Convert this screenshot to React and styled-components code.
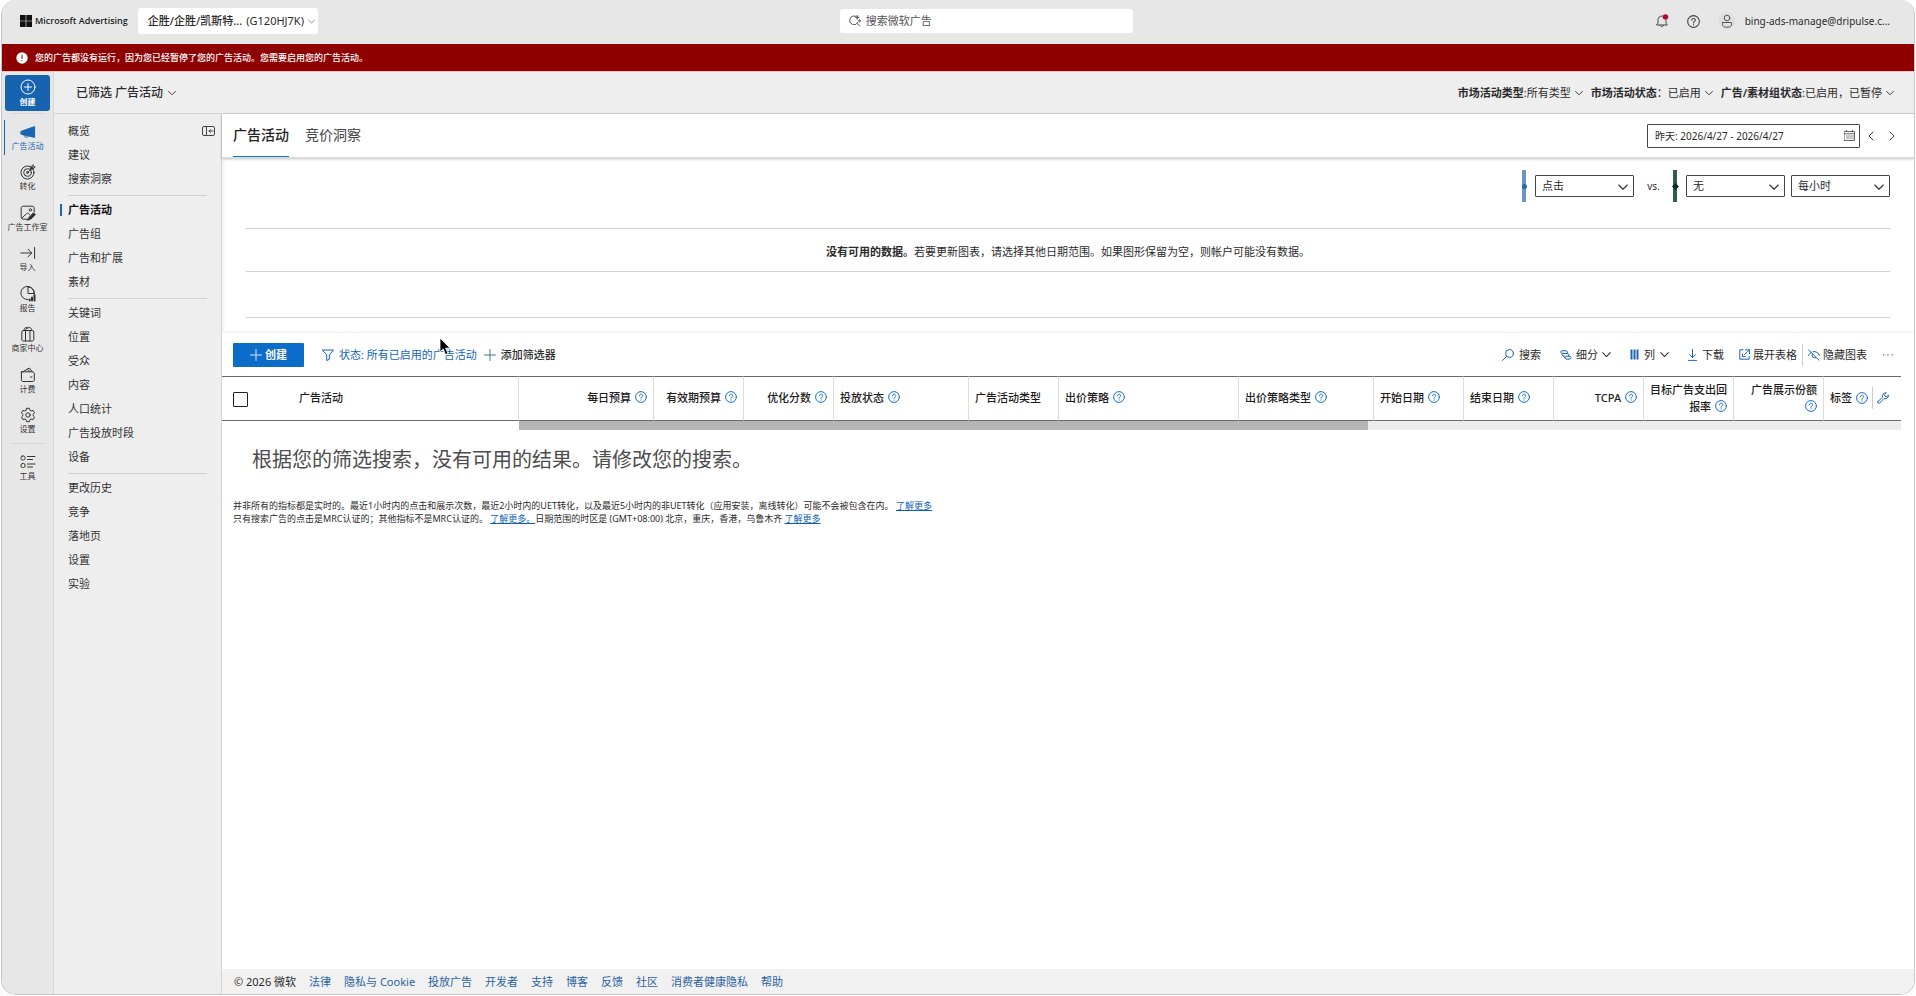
import React from "react";
import styled, { createGlobalStyle, css } from "styled-components";

const GlobalStyle = createGlobalStyle`
  *, *::before, *::after { box-sizing: border-box; }
  html, body, #root { height: 100%; }
  body {
    margin: 0;
    background: #fdfdfd;
    color: #2b2b2b;
    font-family: "Noto Sans", "Noto Sans CJK SC", sans-serif;
    font-size: 11px;
    line-height: 16px;
  }
  button, input, select { font: inherit; color: inherit; }
  button { padding: 0; border: 0; background: none; cursor: pointer; white-space: nowrap; }
  ul { margin: 0; padding: 0; list-style: none; }
  a { text-decoration: none; color: inherit; }
`;

const Window = styled.div`
  display: flex;
  flex-direction: column;
  min-height: calc(100vh - 1px);
  margin: 0 1px 1px;
  overflow: hidden;
  border: 1px solid #c8c8c8;
  border-top: 0;
  border-radius: 15px;
  background: #eee;
`;

const Svg = styled.svg`
  flex: none;
  width: ${(p) => p.$w || 12}px;
  height: ${(p) => p.$h || p.$w || 12}px;
  color: ${(p) => p.$color || "inherit"};
  fill: none;
  stroke: currentColor;
  stroke-width: ${(p) => p.$stroke || 1};
  stroke-linecap: round;
  stroke-linejoin: round;
`;

const BLUE = "#1a66b3";

const Chevron = ({ w = 8, color }) => (
  <Svg viewBox="0 0 8 8" $w={w} $color={color} aria-hidden="true"><path strokeWidth=".9" d="M.6 2.4 4 5.8l3.4-3.4" /></Svg>
);
const Help = ({ size = 12, color = "#1a6fc4" }) => (
  <Svg viewBox="0 0 12 12" $w={size} $color={color} aria-hidden="true">
    <circle cx="6" cy="6" r="5.4" />
    <path d="M4.4 4.8c0-2.2 3.3-2.1 3.3-.2C7.7 5.8 6 5.9 6 7.3M6 8.9v.2" />
  </Svg>
);
const Plus = ({ color }) => (
  <Svg viewBox="0 0 12 12" $w={12} $color={color} aria-hidden="true"><path d="M6 .5v11M.5 6h11" /></Svg>
);

/* Top bar */
const TopBar = styled.header`
  display: flex;
  align-items: center;
  justify-content: space-between;
  height: 44px;
  padding: 0 24px 2px 18px;
  background: #e7e7e7;
`;
const Group = styled.div`
  display: flex;
  align-items: center;
  gap: ${(p) => p.$gap || 0}px;
`;
const Brand = styled.a`
  display: flex;
  align-items: center;
  gap: 3px;
  color: #1c1c1c;
  font: 600 9px/16px "Open Sans", sans-serif;
  white-space: nowrap;
`;
const AccountButton = styled.button`
  display: flex;
  align-items: center;
  gap: 4px;
  width: 180px;
  height: 26px;
  padding: 0 10px;
  border-radius: 3px;
  background: #fff;
  strong { font-weight: 500; }
`;
const SearchField = styled.label`
  display: flex;
  align-items: center;
  gap: 5px;
  width: 293px;
  height: 24px;
  padding: 0 9px;
  border-radius: 3px;
  background: #fff;
  input { flex: 1; min-width: 0; padding: 0; border: 0; outline: 0; background: none; }
  input::placeholder { color: #555; opacity: 1; }
`;
const IconButton = styled.button`
  display: flex;
  align-items: center;
  justify-content: center;
  color: ${(p) => p.$color || "#444"};
`;
const UserButton = styled.button`
  display: flex;
  align-items: center;
  gap: 9px;
  font-size: 10px;
`;
const Avatar = styled.span`
  display: flex;
  align-items: center;
  justify-content: center;
  width: 18px;
  height: 18px;
  border-radius: 50%;
  background: #e0e0e0;
`;

const Banner = styled.div`
  display: flex;
  align-items: center;
  gap: 7px;
  height: 28px;
  padding: 0 14px;
  border-bottom: 1px solid #f6c5c5;
  background: #8f0000;
  color: #fff;
  font-size: 9px;
  font-weight: 500;
`;

/* Body frame */
const Body = styled.div`
  display: flex;
  flex: 1;
`;
const Rail = styled.nav`
  flex: none;
  width: 52px;
  padding: 3px 3px 0;
  border-right: 1px solid #d6d6d6;
  background: #e7e7e7;
  font-size: 8px;
  line-height: 10px;
`;
const RailCreate = styled.button`
  display: flex;
  flex-direction: column;
  align-items: center;
  justify-content: center;
  gap: 2px;
  width: 45px;
  height: 36px;
  border-radius: 3px;
  background: #1763b0;
  color: #fff;
  font-weight: 700;
`;
const RailRule = styled.hr`
  width: 32px;
  height: 1px;
  margin: 2px auto 0;
  border: 0;
  background: #d4d4d4;
`;
const RailList = styled.ul`
  display: grid;
  grid-auto-rows: ${(p) => (p.$tall ? "1fr" : "40px")};
  height: ${(p) => (p.$tall ? "324px" : "auto")};
  margin-top: 3px;
`;
const RailLink = styled.a`
  position: relative;
  display: flex;
  flex-direction: column;
  align-items: center;
  justify-content: center;
  gap: 1px;
  height: 100%;
  margin: 0 -3px;
  color: ${(p) => (p.$active ? BLUE : "#333")};
  white-space: nowrap;
  ${(p) => p.$active && css`
    &::before {
      content: "";
      position: absolute;
      left: 2px;
      top: 3px;
      bottom: 3px;
      width: 1px;
      background: ${BLUE};
    }
  `}
`;

const Workspace = styled.div`
  display: flex;
  flex: 1;
  flex-direction: column;
  min-width: 0;
`;
const SubHeader = styled.div`
  display: flex;
  align-items: center;
  justify-content: space-between;
  height: 42px;
  padding: 0 20px 0 22px;
  border-bottom: 1px solid #d4d4d4;
`;
const ScopeButton = styled.button`
  display: flex;
  align-items: center;
  gap: 5px;
  font-size: 12px;
  font-weight: 500;
`;
const FilterButton = styled.button`
  display: flex;
  align-items: center;
  gap: 4px;
  b { font-weight: 600; }
`;
const Columns = styled.div`
  display: flex;
  flex: 1;
`;
const SideNav = styled.nav`
  position: relative;
  flex: none;
  width: 168px;
  padding: 5px 14px 0;
  border-right: 1px solid #d4d4d4;
`;
const Collapse = styled.button`
  position: absolute;
  top: 12px;
  right: 6px;
  display: flex;
`;
const NavGroup = styled.ul`
  & + & {
    margin-top: 4px;
    padding-top: 2px;
    border-top: 1px solid #d0d0d0;
  }
`;
const NavLink = styled.a`
  position: relative;
  display: block;
  line-height: 24px;
  font-weight: ${(p) => (p.$active ? 600 : 400)};
  color: ${(p) => (p.$active ? "#111" : "#333")};
  ${(p) => p.$active && css`
    &::before {
      content: "";
      position: absolute;
      left: -8px;
      top: 6px;
      width: 2px;
      height: 12px;
      background: ${BLUE};
    }
  `}
`;

const Main = styled.main`
  display: flex;
  flex: 1;
  flex-direction: column;
  min-width: 0;
  background: #fff;
`;
const TabBar = styled.div`
  z-index: 1;
  display: flex;
  align-items: stretch;
  justify-content: space-between;
  height: 44px;
  padding: 0 19px 0 11px;
  border-bottom: 1px solid #ddd;
  box-shadow: 0 1px 3px rgba(0, 0, 0, 0.22);
`;
const Tabs = styled.div`
  display: flex;
  gap: 16px;
`;
const Tab = styled.button`
  border-bottom: 1px solid ${(p) => (p.$active ? "#0d76c2" : "transparent")};
  color: ${(p) => (p.$active ? "#222" : "#444")};
  font-size: 14px;
  font-weight: ${(p) => (p.$active ? 500 : 400)};
`;
const DateButton = styled.button`
  display: flex;
  align-items: center;
  justify-content: space-between;
  width: 213px;
  height: 24px;
  padding: 0 4px 0 7px;
  border: 1px solid #444;
  border-radius: 1px;
  font-size: 10px;
`;

const Chart = styled.section`
  height: 175px;
  padding: 12px 24px 0;
  border-bottom: 1px solid #f3f3f3;
  box-shadow: inset 2px 0 3px rgba(0, 0, 0, 0.06);
`;
const Controls = styled.div`
  display: flex;
  align-items: center;
  justify-content: flex-end;
  height: 32px;
`;
const SeriesMark = styled.span`
  display: flex;
  align-items: center;
  justify-content: center;
  width: 4px;
  height: 32px;
  margin-right: 9px;
  background: ${(p) => p.$bar};
  &::before {
    content: "";
    flex: none;
    width: 5px;
    height: 5px;
    border-radius: ${(p) => (p.$diamond ? 0 : "50%")};
    background: ${(p) => p.$dot};
    transform: ${(p) => (p.$diamond ? "rotate(45deg)" : "none")};
  }
`;
const Versus = styled.span`
  width: 39px;
  text-align: center;
  font-size: 10px;
`;
const SelectWrap = styled.span`
  display: grid;
  align-items: center;
  width: 99px;
  & + & { margin-left: 6px; }
  & > * { grid-area: 1 / 1; }
  svg { justify-self: end; margin: 2px 6px 0 0; pointer-events: none; }
  select {
    width: 100%;
    height: 22px;
    padding: 0 20px 0 6px;
    border: 1px solid #444;
    border-radius: 1px;
    background: #fff;
    appearance: none;
  }
`;
const Gridlines = styled.div`
  display: grid;
  grid-template-rows: 43px 45px;
  margin-top: 26px;
  border: 1px solid #d4d4d4;
  border-width: 1px 0;
`;
const EmptyChart = styled.p`
  margin: 0;
  padding-top: 15px;
  border-bottom: 1px solid #d4d4d4;
  text-align: center;
  b { font-weight: 600; }
`;

/* Grid toolbar */
const Toolbar = styled.div`
  display: flex;
  align-items: center;
  justify-content: space-between;
  height: 43px;
  padding: 0 20px 0 11px;
`;
const PrimaryButton = styled.button`
  display: flex;
  align-items: center;
  justify-content: center;
  gap: 3px;
  width: 71px;
  height: 24px;
  border-radius: 1px;
  background: #0c6cc9;
  color: #fff;
  font-weight: 600;
`;
const ToolButton = styled.button`
  display: flex;
  align-items: center;
  gap: ${(p) => p.$gap || 5}px;
  color: ${(p) => p.$color || "inherit"};
  font-weight: ${(p) => p.$weight || 400};
`;
const Divider = styled.span`
  width: 1px;
  height: 22px;
  background: #ccc;
`;

const Table = styled.table`
  width: calc(100% - 13px);
  border-collapse: separate;
  border-spacing: 0;
  table-layout: fixed;
`;
const Th = styled.th`
  width: ${(p) => (p.$width ? `${p.$width}px` : "auto")};
  height: 45px;
  padding: 0 6px 2px 6px;
  border-top: 1px solid #6b6b6b;
  border-bottom: 1px solid #6b6b6b;
  border-left: ${(p) => (p.$plain ? 0 : "1px solid #dcdcdc")};
  text-align: ${(p) => (p.$right ? "right" : "left")};
  font-weight: 500;
  line-height: 17px;
  color: #1c1c1c;
  svg { margin-left: 1px; vertical-align: -1px; }
`;
const CheckCell = styled(Th)`
  padding: 2px 0 0 11px;
  input {
    display: block;
    width: 15px;
    height: 15px;
    margin: 0;
    border: 1px solid #222;
    border-radius: 1px;
    background: #fff;
    appearance: none;
  }
`;
const LabelCell = styled.div`
  display: flex;
  align-items: center;
  gap: 4px;
  white-space: nowrap;
  svg { margin: 0; }
`;
const ScrollTrack = styled.div`
  display: flex;
  height: 9px;
  margin: 0 13px 0 297px;
  background: #ececec;
`;
const ScrollThumb = styled.span`
  width: 61.4%;
  background: #b5b5b5;
`;
const NoResults = styled.p`
  margin: 14px 0 0 30px;
  color: #4d4d4d;
  font-size: 20px;
  line-height: 32px;
`;
const Notes = styled.div`
  margin: 23px 0 0 11px;
  font-size: 9px;
  line-height: 13px;
  p { margin: 0; }
  a { color: #0c5fb8; text-decoration: underline; }
`;
const Footer = styled.footer`
  display: flex;
  align-items: center;
  gap: 13px;
  height: 25px;
  margin-top: auto;
  padding-left: 12px;
  background: #f1f1f1;
  a { color: #2b63a3; }
`;
const Pointer = styled.svg`
  position: absolute;
  left: 439px;
  top: 337px;
  z-index: 2;
  width: 12px;
  height: 19px;
  pointer-events: none;
`;

const railIcons = {
  campaign: <><path fill="currentColor" d="M1.2 7.3 14.6 2.6v10.8L1.2 10.2z" /><path d="M4 11.3c.2 2.2 4 2.8 4.4.9" /></>,
  goal: <><circle cx="7.5" cy="8.5" r="6.5" /><circle cx="7.5" cy="8.5" r="3.8" /><circle cx="7.5" cy="8.5" r="1" /><path d="m7.7 8.3 5-5M11 2.7l2-2v2.2h2.2L13 5.2h-2z" /></>,
  studio: <><path d="M14.2 7V3.2c0-1.3-.7-2-2-2h-9c-1.3 0-2 .7-2 2v9c0 1.3.7 2 2 2H7" /><circle cx="10.4" cy="4.9" r="1.2" /><path d="m2 13 4.6-4.500c.6-.5 1.200-.5 1.800 0l1.200 1.200" /><path fill="currentColor" d="m9.2 12.2 4.300-4.400 1.900 1.900-4.400 4.200-3.400 1.200z" /></>,
  import: <path d="M.8 8h10.8M8 4.2 11.8 8 8 11.8M14.6 2.5v11" />,
  report: <><path d="M14 8A6.6 6.6 0 1 0 8 13.6M8 1v6.5h6.4C14.4 4 11.8 1 8 1" /><path strokeWidth="2" d="M9.7 13.6v1M12 11.4v3.2M14.5 9v5.6" /></>,
  store: <><rect x="1.8" y="4.5" width="12" height="10.5" rx="1.5" /><path d="M5.5 4.5V15M10 4.5V15M4 4.5C4 1 7 .5 8 2.500M5.500 4.500C6 0 11.500 0 11.800 4.500" /></>,
  wallet: <><path d="M3 4.8H1.4v8c0 1 .6 1.700 1.600 1.700h9.800c1 0 1.500-.6 1.500-1.500V7c0-1.500-.6-2.200-2-2.200H1.400M3.600 4.400 9.300 1l3 3.700M7.400 2.100l2.500 2.500" /><path d="M10.500 10h1.400" /></>,
  gear: <><circle cx="8" cy="8" r="2.2" /><path d="M6.600 1.300h2.800l.5 2 1.200.7 2-.6 1.500 2.500-1.500 1.400v1.400l1.500 1.400-1.500 2.500-2-.6-1.200.7-.5 2H6.600l-.5-2-1.200-.7-2 .6-1.500-2.500 1.500-1.400V7.300L1.400 5.900l1.500-2.500 2 .6 1.200-.7z" /></>,
  tools: <><rect x="1" y="2" width="4" height="4" rx="1.5" /><rect x="1" y="9.5" width="4" height="4" rx="1.5" /><path d="M7.5 2.5h7.5M7.5 5.5h5M7.5 10h7.500M7.500 13h5" /></>,
};
const railItems = [
  ["campaign", "广告活动"], ["goal", "转化"], ["studio", "广告工作室"], ["import", "导入"],
  ["report", "报告"], ["store", "商家中心"], ["wallet", "计费"], ["gear", "设置"],
];
const RailItem = ({ icon, label, active }) => (
  <li>
    <RailLink href="#" $active={active}>
      <Svg viewBox="0 0 16 16" $w={16} aria-hidden="true">{railIcons[icon]}</Svg>
      {label}
    </RailLink>
  </li>
);

const navGroups = [
  ["概览", "建议", "搜索洞察"],
  ["广告活动", "广告组", "广告和扩展", "素材"],
  ["关键词", "位置", "受众", "内容", "人口统计", "广告投放时段", "设备"],
  ["更改历史", "竞争", "落地页", "设置", "实验"],
];

const columns = [
  { label: "每日预算", width: 135, right: true, help: true },
  { label: "有效期预算", width: 90, right: true, help: true },
  { label: "优化分数", width: 90, right: true, help: true },
  { label: "投放状态", width: 135, help: true },
  { label: "广告活动类型", width: 90 },
  { label: "出价策略", width: 180, help: true },
  { label: "出价策略类型", width: 135, help: true },
  { label: "开始日期", width: 90, help: true },
  { label: "结束日期", width: 90, help: true },
  { label: "TCPA", width: 90, right: true, help: true },
  { label: "目标广告支出回报率", width: 90, right: true, help: true },
  { label: "广告展示份额", width: 90, right: true, help: true },
];

const footerLinks = ["法律", "隐私与 Cookie", "投放广告", "开发者", "支持", "博客", "反馈", "社区", "消费者健康隐私", "帮助"];

const Select = ({ label, value }) => (
  <SelectWrap>
    <select aria-label={label} defaultValue={value}><option>{value}</option></select>
    <Chevron w={10} color="#333" />
  </SelectWrap>
);

export default function App() {
  return (
    <>
      <GlobalStyle />
      <Window>
        <TopBar>
          <Group $gap={10}>
            <Brand href="#">
              <Svg viewBox="0 0 12 12" $w={12} $color="#111" aria-hidden="true">
                <path stroke="none" fill="currentColor" d="M0 0h5.700v5.700H0zM6.300 0H12v5.700H6.300zM0 6.300h5.700V12H0zM6.300 6.300H12V12H6.300z" />
              </Svg>
              Microsoft Advertising
            </Brand>
            <AccountButton>
              <strong>企胜/企胜/凯斯特...</strong>
              <span>(G120HJ7K)</span>
              <Chevron w={7} color="#777" />
            </AccountButton>
          </Group>
          <SearchField>
            <Svg viewBox="0 0 12 12" $w={12} $color="#555" aria-hidden="true">
              <path d="M6.500 1.300A4.300 4.300 0 1 0 9 7.300M8.500 8.700l2.300 2.500" />
              <path fill="currentColor" strokeWidth=".5" d="m8.200.2.6 1.500 1.500.6-1.500.6-.6 1.500-.6-1.500-1.500-.6 1.500-.6zM10.500 4.500l.4 1 1 .4-1 .4-.4 1-.4-1-1-.4 1-.4z" />
            </Svg>
            <input type="search" placeholder="搜索微软广告" aria-label="搜索微软广告" />
          </SearchField>
          <Group $gap={18}>
            <IconButton aria-label="通知">
              <Svg viewBox="0 0 14 14" $w={14} aria-hidden="true">
                <path d="M7.500 2C4.600 1.700 3 3.700 3 6v3.200L1.500 11h10.800L11 9.200V6.500M5.200 11.300c.3 1.900 3 1.900 3.400 0" />
                <circle cx="10.500" cy="3" r="2.800" fill="#b01030" stroke="none" />
              </Svg>
            </IconButton>
            <IconButton aria-label="帮助"><Help size={13} color="#444" /></IconButton>
            <UserButton>
              <Avatar>
                <Svg viewBox="0 0 12 14" $w={12} $h={14} $color="#555" aria-hidden="true">
                  <circle cx="6" cy="4" r="2.800" /><path d="M1.500 8.500h9c.8 4-2 4.700-4.500 4.700S.7 12.500 1.500 8.500z" />
                </Svg>
              </Avatar>
              bing-ads-manage@dripulse.c...
            </UserButton>
          </Group>
        </TopBar>

        <Banner role="alert">
          <Svg viewBox="0 0 12 12" $w={12} aria-hidden="true">
            <circle cx="6" cy="6" r="5.700" fill="#fff" stroke="none" />
            <path stroke="#8f0000" d="M6 3.200v3.300M6 8.500v.1" />
          </Svg>
          您的广告都没有运行，因为您已经暂停了您的广告活动。您需要启用您的广告活动。
        </Banner>

        <Body>
          <Rail aria-label="主导航">
            <RailCreate>
              <Svg viewBox="0 0 16 16" $w={16} aria-hidden="true"><circle cx="8" cy="8" r="7" /><path d="M8 4.500v7M4.500 8h7" /></Svg>
              创建
            </RailCreate>
            <RailRule />
            <RailList $tall>
              {railItems.map(([icon, label], i) => <RailItem key={icon} icon={icon} label={label} active={i === 0} />)}
            </RailList>
            <RailRule />
            <RailList><RailItem icon="tools" label="工具" /></RailList>
          </Rail>

          <Workspace>
            <SubHeader>
              <ScopeButton>已筛选 广告活动 <Chevron w={8} /></ScopeButton>
              <Group $gap={8}>
                <FilterButton><span><b>市场活动类型</b>:所有类型</span><Chevron /></FilterButton>
                <FilterButton><span><b>市场活动状态</b>：已启用</span><Chevron /></FilterButton>
                <FilterButton><span><b>广告/素材组状态</b>:已启用，已暂停</span><Chevron /></FilterButton>
              </Group>
            </SubHeader>

            <Columns>
              <SideNav aria-label="广告活动导航">
                <Collapse aria-label="折叠导航">
                  <Svg viewBox="0 0 13 10" $w={13} $h={10} $color="#444" aria-hidden="true">
                    <rect x=".5" y=".5" width="12" height="9" rx="1.500" /><path d="M4.500.5v9M7 5h4M8.500 3.500 7 5l1.500 1.500" />
                  </Svg>
                </Collapse>
                {navGroups.map((items, g) => (
                  <NavGroup key={g}>
                    {items.map((t) => (
                      <li key={t}><NavLink href="#" $active={t === "广告活动"}>{t}</NavLink></li>
                    ))}
                  </NavGroup>
                ))}
              </SideNav>

              <Main>
                <TabBar>
                  <Tabs>
                    <Tab $active>广告活动</Tab>
                    <Tab>竞价洞察</Tab>
                  </Tabs>
                  <Group $gap={8}>
                    <DateButton>
                      昨天: 2026/4/27 - 2026/4/27
                      <Svg viewBox="0 0 11 11" $w={11} $color="#444" aria-hidden="true">
                        <path strokeWidth=".8" d="M.5 1.500h10v9H.5zM.5 3.800h10M2.500.3v1M8.500.3v1" />
                        <path strokeWidth=".6" d="M3 5.500v3.500M5 5.500v3.500M7 5.500v3.500M9 5.500v3.500" />
                      </Svg>
                    </DateButton>
                    <Group $gap={15}>
                      <IconButton aria-label="上一时段"><Svg viewBox="0 0 6 10" $w={6} $h={10} aria-hidden="true"><path d="M5 1 1 5l4 4" /></Svg></IconButton>
                      <IconButton aria-label="下一时段"><Svg viewBox="0 0 6 10" $w={6} $h={10} aria-hidden="true"><path d="m1 1 4 4-4 4" /></Svg></IconButton>
                    </Group>
                  </Group>
                </TabBar>

                <Chart>
                  <Controls>
                    <SeriesMark $bar="#6b95c7" $dot="#2468b0" />
                    <Select label="指标" value="点击" />
                    <Versus>vs.</Versus>
                    <SeriesMark $bar="#335c4c" $dot="#0c2a20" $diamond />
                    <Select label="对比指标" value="无" />
                    <Select label="粒度" value="每小时" />
                  </Controls>
                  <Gridlines>
                    <EmptyChart><b>没有可用的数据。</b>若要更新图表，请选择其他日期范围。如果图形保留为空，则帐户可能没有数据。</EmptyChart>
                  </Gridlines>
                </Chart>

                <Toolbar>
                  <Group $gap={18}>
                    <PrimaryButton><Plus color="#d5e6f8" />创建</PrimaryButton>
                    <Group $gap={7}>
                      <ToolButton $color="#1263bd">
                        <Svg viewBox="0 0 12 12" $w={12} aria-hidden="true"><path d="M.6 1h10.800L7.300 6v4.300L4.700 11.500V6z" /></Svg>
                        状态: 所有已启用的广告活动
                      </ToolButton>
                      <ToolButton $weight={500}><Plus color="#4a6f98" />添加筛选器</ToolButton>
                    </Group>
                  </Group>
                  <Group $gap={19}>
                    <ToolButton>
                      <Svg viewBox="0 0 12 12" $w={12} $color={BLUE} aria-hidden="true"><circle cx="7.500" cy="4.500" r="3.900" /><path d="M4.600 7.400.6 11.400" /></Svg>
                      搜索
                    </ToolButton>
                    <ToolButton $gap={4}>
                      <Svg viewBox="0 0 12 12" $w={12} $color={BLUE} aria-hidden="true">
                        <path d="M3.500 4.300h-2L.6 3l.9-1.200h5L7.600 3l-.8 1.300M4.200 7H3L2 5.700 3 4.500h5l1 1.200L8.200 7M6 9.800 5.200 8.500 6 7.200h4.200l1.100 1.300-1.100 1.300zM3.500 7l1.800 2.300" />
                      </Svg>
                      细分 <Chevron w={9} />
                    </ToolButton>
                    <ToolButton>
                      <Svg viewBox="0 0 9 11" $w={9} $h={11} $color={BLUE} $stroke={2} aria-hidden="true"><path strokeLinecap="butt" d="M1.500.5v10M4.500.5v10M7.500.5v10" /></Svg>
                      列 <Chevron w={9} />
                    </ToolButton>
                    <Group $gap={15}>
                      <ToolButton>
                        <Svg viewBox="0 0 9 12" $w={9} $h={12} $color={BLUE} aria-hidden="true"><path d="M4.500.5v8M1.500 5.600l3 3 3-3M.5 11.400h8" /></Svg>
                        下载
                      </ToolButton>
                      <Group $gap={5}>
                        <ToolButton $gap={3}>
                          <Svg viewBox="0 0 11 11" $w={11} $color={BLUE} aria-hidden="true"><path d="M4 .8H.8v9.400h9.400V7.500M6.500.8h3.900v3.900M10.200 1 5.500 5.500M3.500 5v2.500H6" /></Svg>
                          展开表格
                        </ToolButton>
                        <Divider />
                        <ToolButton $gap={3}>
                          <Svg viewBox="0 0 12 12" $w={12} $color={BLUE} aria-hidden="true"><path d="M.6 1 11 11.200M.6 6.500c.7-1.600 1.700-2.500 2.800-3.200M5 2.600c3-.5 5.500 1.200 6.500 3.900M4.500 5.200a2.300 2.300 0 0 0 3.200 3.200" /></Svg>
                          隐藏图表
                        </ToolButton>
                      </Group>
                      <IconButton $color="#3f6896" aria-label="更多">
                        <Svg viewBox="0 0 12 4" $w={12} $h={4} aria-hidden="true"><path fill="currentColor" stroke="none" d="M1 1.300h1.300v1.300H1zM5.300 1.300h1.300v1.300H5.300zM9.600 1.300h1.300v1.300H9.600z" /></Svg>
                      </IconButton>
                    </Group>
                  </Group>
                </Toolbar>

                <Table>
                  <thead>
                    <tr>
                      <CheckCell $plain $width={71} scope="col"><input type="checkbox" aria-label="全选" /></CheckCell>
                      <Th $plain scope="col">广告活动</Th>
                      {columns.map((c) => (
                        <Th key={c.label} scope="col" $width={c.width} $right={c.right}>{c.label} {c.help && <Help />}</Th>
                      ))}
                      <Th $width={78} scope="col">
                        <LabelCell>
                          标签
                          <Help />
                          <Divider />
                          <IconButton $color={BLUE} aria-label="自定义列">
                            <Svg viewBox="0 0 12 12" $w={12} aria-hidden="true"><path d="m.8 9.700 4.700-4.500C4.900 2.600 6.900.3 9.300.8L7.600 2.600l.5 1.600 1.600.4L11.400 3c.3 2.600-1.800 4.300-4.500 3.600L2.300 11.300c-1.200.5-2-.6-1.500-1.600z" /></Svg>
                          </IconButton>
                        </LabelCell>
                      </Th>
                    </tr>
                  </thead>
                </Table>
                <ScrollTrack><ScrollThumb /></ScrollTrack>

                <NoResults>根据您的筛选搜索，没有可用的结果。请修改您的搜索。</NoResults>
                <Notes>
                  <p>并非所有的指标都是实时的。最近1小时内的点击和展示次数，最近2小时内的UET转化，以及最近5小时内的非UET转化（应用安装，离线转化）可能不会被包含在内。 <a href="#">了解更多</a></p>
                  <p>只有搜索广告的点击是MRC认证的；其他指标不是MRC认证的。 <a href="#">了解更多。</a>日期范围的时区是 (GMT+08:00) 北京，重庆，香港，乌鲁木齐 <a href="#">了解更多</a></p>
                </Notes>

                <Footer>
                  <span>© 2026 微软</span>
                  {footerLinks.map((t) => <a key={t} href="#">{t}</a>)}
                </Footer>
              </Main>
            </Columns>
          </Workspace>
        </Body>
      </Window>
      <Pointer viewBox="0 0 12 19" aria-hidden="true">
        <path fill="#000" stroke="#fff" strokeWidth=".8" d="M1 1v14l3.200-3 2.300 5.500 2.500-1-2.400-5.300H11z" />
      </Pointer>
    </>
  );
}
